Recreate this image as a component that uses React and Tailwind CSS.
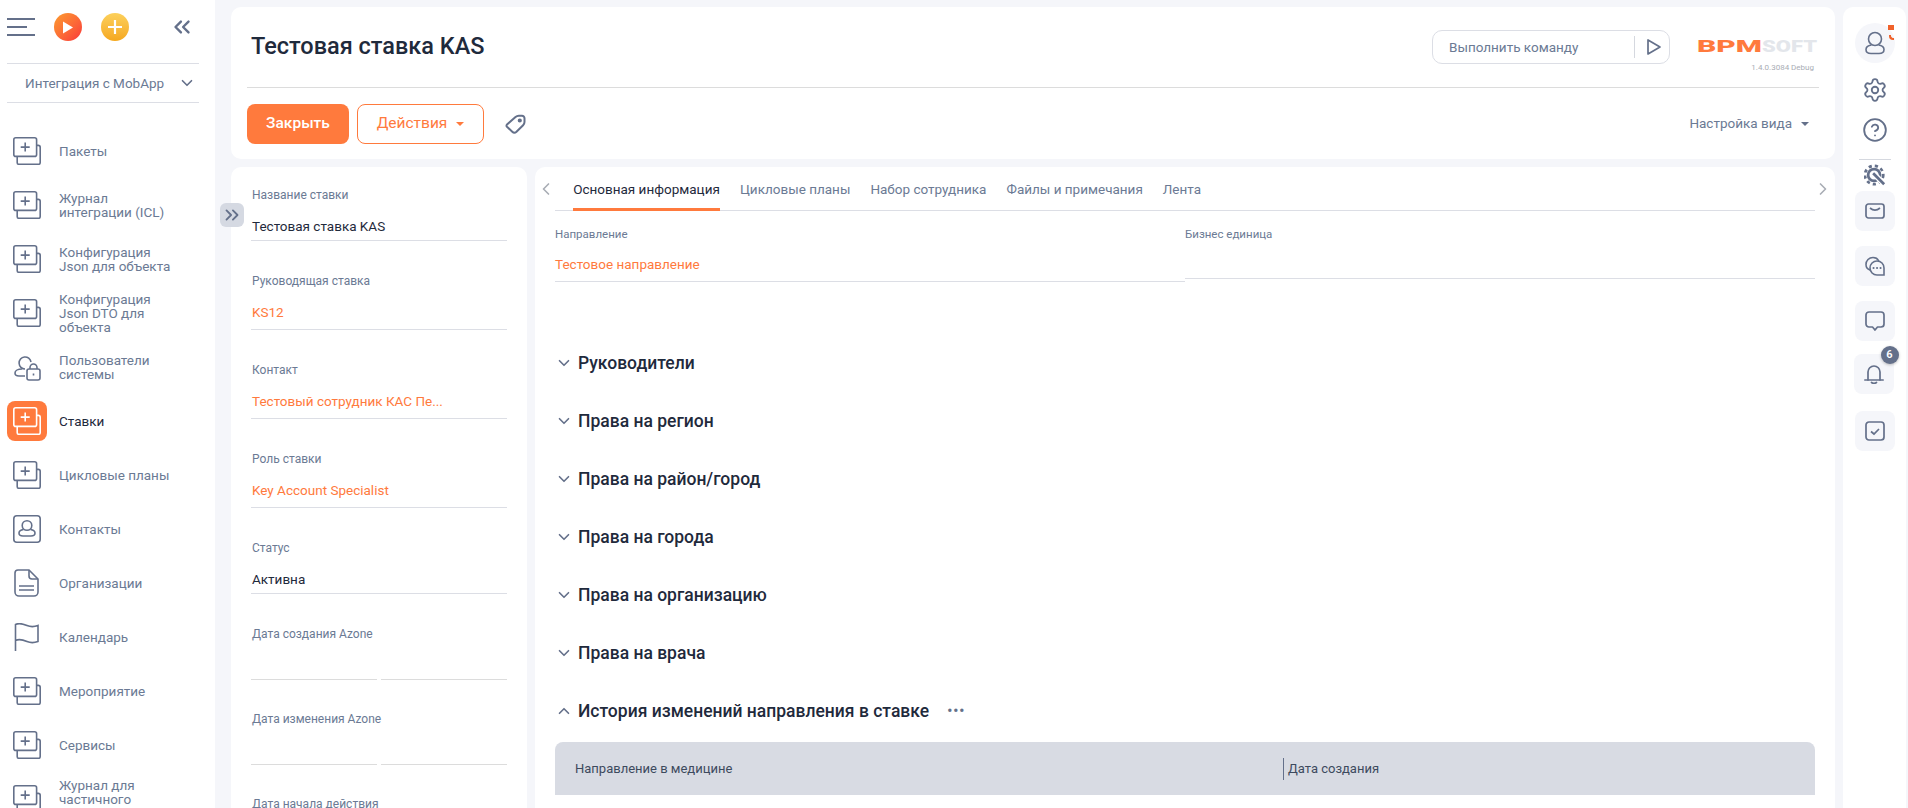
import { ChevronDown, ChevronUp, ChevronLeft, ChevronRight, ChevronsLeft, ChevronsRight, Settings, CircleHelp } from 'lucide-react'

const navColor = '#64708a'

const PlusStack = ({ color = navColor }) => (
  <svg width="28" height="28" viewBox="0 0 28 28" fill="none" stroke={color} strokeWidth="1.6">
    <rect x="0.8" y="0.8" width="22.8" height="18.6" rx="2" />
    <path d="M23.6 8.4h1.6a2 2 0 0 1 2 2v15a2 2 0 0 1-2 2H6.2a2 2 0 0 1-2-2v-6" />
    <path d="M12.2 5.6v9M7.7 10.1h9" />
  </svg>
)

const UserLock = () => (
  <svg width="30" height="30" viewBox="0 0 30 30" fill="none" stroke={navColor} strokeWidth="1.6">
    <path d="M13 17a6 6 0 1 1 6-7" />
    <path d="M10 17c-4 0-7 1.600-7 4 0 2 1.500 3 4 3h6" />
    <rect x="15" y="17" width="13" height="11" rx="2" />
    <path d="M18 17v-1.500a3.500 3.500 0 0 1 7 0V17M21.500 21.500v2" />
  </svg>
)

const ContactCard = () => (
  <svg width="28" height="28" viewBox="0 0 28 28" fill="none" stroke={navColor} strokeWidth="1.6">
    <rect x="0.8" y="0.8" width="26.4" height="26.4" rx="3" />
    <circle cx="14" cy="10.500" r="4.800" />
    <path d="M10.500 14.500c-3 .5-4.500 2-4.500 3.500 0 2 1.500 3 4 3h8c2.500 0 4-1 4-3 0-1.500-1.500-3-4.500-3.500" />
  </svg>
)

const DocIcon = () => (
  <svg width="26" height="28" viewBox="0 0 26 28" fill="none" stroke={navColor} strokeWidth="1.6">
    <path d="M4 1h11l9 9v13a4 4 0 0 1-4 4H5a4 4 0 0 1-4-4V4a3 3 0 0 1 3-3z" />
    <path d="M15 1v6a3 3 0 0 0 3 3h6" />
    <path d="M5 17h15M5 21h15" />
  </svg>
)

const FlagIcon = () => (
  <svg width="26" height="28" viewBox="0 0 26 28" fill="none" stroke={navColor} strokeWidth="1.6">
    <path d="M1.500 28V1.500c4-2 8-.5 11.500 1s7 1.500 11 0v16c-4 1.500-7.500 1.500-11 0s-7.500-3-11.500-1" />
  </svg>
)

const navItems = [
  { label: 'Пакеты' },
  { label: 'Журнал\nинтеграции (ICL)' },
  { label: 'Конфигурация\nJson для объекта' },
  { label: 'Конфигурация\nJson DTO для\nобъекта' },
  { label: 'Пользователи\nсистемы', icon: <UserLock /> },
  { label: 'Ставки', active: true },
  { label: 'Цикловые планы' },
  { label: 'Контакты', icon: <ContactCard /> },
  { label: 'Организации', icon: <DocIcon /> },
  { label: 'Календарь', icon: <FlagIcon /> },
  { label: 'Мероприятие' },
  { label: 'Сервисы' },
  { label: 'Журнал для\nчастичного\nобновления' },
]

const fields = [
  { label: 'Название ставки', value: 'Тестовая ставка KAS', h: 'h-[86px]', pb: 'pb-[2px]' },
  { label: 'Руководящая ставка', value: 'KS12', link: true, h: 'h-[89px]', pb: 'pb-[5px]' },
  { label: 'Контакт', value: 'Тестовый сотрудник КАС Пе...', link: true, h: 'h-[89px]', pb: 'pb-[5px]' },
  { label: 'Роль ставки', value: 'Key Account Specialist', link: true, h: 'h-[89px]', pb: 'pb-[5px]' },
  { label: 'Статус', value: 'Активна', h: 'h-[86px]', pb: 'pb-[2px]' },
  { label: 'Дата создания Azone', split: true, h: 'h-[85px]' },
  { label: 'Дата изменения Azone', split: true, h: 'h-[85px]' },
  { label: 'Дата начала действия', split: true, h: 'h-[85px]' },
]

const tabs = ['Цикловые планы', 'Набор сотрудника', 'Файлы и примечания', 'Лента']

const sections = ['Руководители', 'Права на регион', 'Права на район/город', 'Права на города', 'Права на организацию', 'Права на врача']

function Sidebar() {
  return (
    <aside className="w-[215px] shrink-0 bg-white">
      <div className="flex h-[63px] items-start px-[7px] pt-[13px]">
        <div className="mt-[5px] flex h-[18px] w-[28px] flex-col justify-between">
          <div className="h-[2px] w-[28px] bg-[#64708a]" />
          <div className="h-[2px] w-[20px] bg-[#64708a]" />
          <div className="h-[2px] w-[28px] bg-[#64708a]" />
        </div>
        <div className="ml-[19px] flex h-[28px] w-[28px] items-center justify-center rounded-full bg-gradient-to-br from-[#fb9a2d] to-[#f9303a]">
          <svg width="12" height="13" viewBox="0 0 12 13" fill="white"><path d="M1 0.500 11 6.500 1 12.500z" /></svg>
        </div>
        <div className="ml-[19px] flex h-[28px] w-[28px] items-center justify-center rounded-full bg-gradient-to-b from-[#fcd05a] to-[#f5a81c]">
          <svg width="14" height="14" viewBox="0 0 14 14" stroke="white" strokeWidth="2.200"><path d="M7 0v14M0 7h14" /></svg>
        </div>
        <ChevronsLeft size={26} strokeWidth={2.200} color="#64708a" className="ml-[40px] mt-[1px]" />
      </div>
      <div className="mx-[7px] flex h-[40px] w-[192px] items-center whitespace-nowrap border-y border-[#dcdee5] pl-[18px] text-[13.5px] text-[#6b7a94]">
        <span className="w-[150px]">Интеграция с MobApp</span>
        <ChevronDown size={18} strokeWidth={2.200} color="#64708a" className="ml-[3px]" />
      </div>
      <nav className="pt-[21px]">
        {navItems.map((item) => (
          <div key={item.label} className="flex h-[54px] items-center">
            <div className="flex w-[59px] shrink-0 justify-center pr-[5px]">
              {item.active ? (
                <div className="flex h-[40px] w-[40px] items-center justify-center rounded-[8px] bg-[#ff7a3d]">
                  <PlusStack color="white" />
                </div>
              ) : (
                item.icon || <PlusStack />
              )}
            </div>
            <div className={`w-[150px] whitespace-pre-line text-[13.5px] leading-[14px] ${item.active ? 'text-[#1f2a3c]' : 'text-[#6b7a94]'}`}>
              {item.label}
            </div>
          </div>
        ))}
      </nav>
    </aside>
  )
}

function Header() {
  return (
    <section className="flex h-[152px] flex-col rounded-[10px] bg-white px-[16px]">
      <div className="flex h-[81px] shrink-0 border-b border-[#dcdcdc]">
        <h1 className="pl-[4px] pt-[23px] text-[23.5px] font-medium leading-[32px] text-[#1f2a3c]">Тестовая ставка KAS</h1>
        <div className="ml-auto mt-[23px] flex h-[34px] w-[238px] items-center whitespace-nowrap rounded-[10px] border border-[#dcdee5] pl-[16px] text-[13.5px] text-[#6b7a94]">
          <span className="w-[185px]">Выполнить команду</span>
          <div className="h-[22px] w-px bg-[#d5d8df]" />
          <svg width="16" height="18" viewBox="0 0 16 18" fill="none" stroke="#64708a" strokeWidth="1.700" className="ml-[11px]">
            <path d="M2 2v14l12-7z" strokeLinejoin="round" />
          </svg>
        </div>
        <div className="ml-[27px] w-[122px] pt-[30px]">
          <svg width="122" height="18" viewBox="0 0 122 18" className="overflow-visible">
            <text x="0" y="15" fontFamily="Roboto, sans-serif" fontWeight="900" fontSize="17" fill="#ff7a3d" textLength="65" lengthAdjust="spacingAndGlyphs">BPM</text>
            <text x="65" y="15" fontFamily="Roboto, sans-serif" fontWeight="900" fontSize="17" fill="#e3e6eb" textLength="55" lengthAdjust="spacingAndGlyphs">SOFT</text>
          </svg>
          <div className="pr-[5px] pt-[8px] text-right text-[8px] leading-[10px] text-[#a9adb5]">1.4.0.3084 Debug</div>
        </div>
      </div>
      <div className="flex flex-1 items-center">
        <button className="h-[40px] w-[102px] rounded-[8px] bg-[#ff7a3d] text-[15.5px] font-medium text-white">Закрыть</button>
        <button className="ml-[8px] flex h-[40px] w-[127px] items-center justify-center gap-[9px] rounded-[8px] border border-[#ff7a3d] text-[15.5px] text-[#ff7a3d]">
          Действия
          <span className="h-0 w-0 border-x-[4px] border-t-[4px] border-x-transparent border-t-[#ff7a3d]" />
        </button>
        <svg width="22" height="22" viewBox="0 0 22 22" fill="none" stroke="#64708a" strokeWidth="2" className="ml-[21px]">
          <path d="M2 11.500 10.500 4c1-.9 2-1.300 3.300-1.300H17a2.500 2.500 0 0 1 2.500 2.500v3.800c0 1.200-.5 2.300-1.400 3.200L11.500 18.800c-1.300 1.200-3 1.200-4.200 0L2 13.800c-.7-.7-.7-1.600 0-2.300z" />
          <circle cx="14.800" cy="7.500" r="1.100" />
        </svg>
        <div className="ml-auto flex items-center pr-[10px] text-[13.5px] text-[#6b7a94]">
          Настройка вида
          <span className="ml-[9px] h-0 w-0 border-x-[4px] border-t-[4px] border-x-transparent border-t-[#64708a]" />
        </div>
      </div>
    </section>
  )
}

function LeftPanel() {
  return (
    <section className="h-full w-[296px] shrink-0 overflow-hidden rounded-t-[10px] bg-white px-[20px] pt-[21px]">
      {fields.map((f) => (
        <div key={f.label} className={`flex flex-col ${f.h}`}>
          <div className="pl-[1px] text-[12px] leading-[14px] text-[#6b7a94]">{f.label}</div>
          {f.split ? (
            <div className="mt-[38px] flex gap-[4px]">
              <div className="h-px flex-1 bg-[#dcdcdc]" />
              <div className="h-px flex-1 bg-[#dcdcdc]" />
            </div>
          ) : (
            <div className={`mt-[12px] truncate border-b border-[#dcdee5] pl-[1px] text-[13.5px] leading-[24px] ${f.pb} ${f.link ? 'text-[#ff7a3d]' : 'text-[#1f2a3c]'}`}>
              {f.value}
            </div>
          )}
        </div>
      ))}
    </section>
  )
}

function Section({ title, open, children }) {
  const Chevron = open ? ChevronUp : ChevronDown
  return (
    <div className="flex h-[58px] items-center pb-[1px]">
      <Chevron size={18} strokeWidth={2.200} color="#64708a" className="mr-[5px] shrink-0" />
      <span className="text-[17.5px] font-medium leading-[24px] text-[#1f2a3c]">{title}</span>
      {children}
    </div>
  )
}

function MainPanel() {
  return (
    <section className="h-full min-w-0 flex-1 overflow-hidden rounded-t-[10px] bg-white px-[20px]">
      <div className="flex h-[44px] items-start whitespace-nowrap border-b border-[#dcdee5] text-[13.5px] leading-[18px]">
        <ChevronLeft size={20} strokeWidth={2} color="#a9adb5" className="-ml-[19px] mt-[12px]" />
        <div className="ml-[17px] flex h-[44px] w-[147px] items-start justify-center border-b-[3px] border-[#ff7a3d] pt-[13px] text-[#1f2a3c]">
          Основная информация
        </div>
        <div className="flex gap-[20px] pl-[20px] pt-[13px] text-[#6b7a94]">
          {tabs.map((t) => <span key={t}>{t}</span>)}
        </div>
        <ChevronRight size={20} strokeWidth={2} color="#a9adb5" className="-mr-[18px] ml-auto mt-[12px]" />
      </div>
      <div className="flex h-[108px] items-start pt-[16px]">
        <div className="flex-1">
          <div className="text-[11.5px] leading-[14px] text-[#6b7a94]">Направление</div>
          <div className="mt-[11px] h-[30px] border-b border-[#dcdee5] text-[13.5px] leading-[24px] text-[#ff7a3d]">Тестовое направление</div>
        </div>
        <div className="flex-1">
          <div className="text-[11.5px] leading-[14px] text-[#6b7a94]">Бизнес единица</div>
          <div className="mt-[11px] h-[27px] border-b border-[#dcdee5]" />
        </div>
      </div>
      <div className="pt-[15px]">
        {sections.map((s) => <Section key={s} title={s} />)}
        <Section title="История изменений направления в ставке" open>
          <span className="ml-[18px] text-[14px] font-bold leading-[14px] tracking-[1px] text-[#64708a]">•••</span>
        </Section>
      </div>
      <div className="mt-[2px] flex h-[53px] items-center rounded-t-[8px] bg-[#d8dbe3] pl-[20px] text-[13px] text-[#3d4a5e]">
        <span className="w-[708px]">Направление в медицине</span>
        <div className="mr-[4px] h-[22px] w-px bg-[#64708a]" />
        <span>Дата создания</span>
      </div>
    </section>
  )
}

function RailTile({ className = '', children }) {
  return <div className={`relative flex h-[40px] w-[40px] items-center justify-center rounded-[8px] bg-[#f5f6fa] ${className}`}>{children}</div>
}

function RightRail() {
  return (
    <aside className="flex h-full w-[63px] shrink-0 flex-col items-center rounded-t-[10px] bg-white pt-[16px]">
      <div className="relative flex h-[40px] w-[40px] items-center justify-center rounded-full bg-[#f5f6fa]">
        <svg width="20" height="24" viewBox="0 0 20 24" fill="none" stroke="#64708a" strokeWidth="1.600">
          <circle cx="10" cy="8" r="6.500" />
          <path d="M6.500 14c-3 .5-5.500 2-5.500 4.500S3 22.500 6 22.500h8c3 0 5-1.500 5-4s-2.500-4-5.500-4.500" />
        </svg>
        <span className="absolute right-[1px] top-[2px] h-[5px] w-[6px] bg-[#f0622b]" />
        <span className="absolute right-[1px] top-[12px] h-[5px] w-[5px] rounded-bl-[4px] border-b-2 border-l-2 border-[#f0622b]" />
      </div>
      <Settings size={26} strokeWidth={1.700} color="#64708a" className="mt-[14px]" />
      <CircleHelp size={26} strokeWidth={1.700} color="#64708a" className="mt-[14px]" />
      <div className="mt-[16px] h-px w-[32px] bg-[#d5d8df]" />
      <svg width="22" height="22" viewBox="0 0 24 24" fill="none" stroke="#64708a" className="mt-[4px]">
        <circle cx="11" cy="12" r="6.500" strokeWidth="3" />
        <circle cx="11" cy="12" r="10" strokeWidth="3" strokeDasharray="3.500 3.300" />
        <path d="M10 10l13 13" stroke="white" strokeWidth="6" />
        <path d="M10 10l12 12" strokeWidth="3" />
      </svg>
      <div className="mt-[5px] flex flex-col items-center">
        <RailTile>
          <svg width="20" height="16" viewBox="0 0 20 16" fill="none" stroke="#64708a" strokeWidth="1.700">
            <rect x="1" y="1" width="18" height="14" rx="2.500" />
            <path d="M5 5c3 2.500 7 2.500 10 0" />
          </svg>
        </RailTile>
        <RailTile className="mt-[15px]">
          <svg width="20" height="20" viewBox="0 0 20 20" fill="none" stroke="#64708a" strokeWidth="1.600" strokeLinecap="round">
            <path d="M5 14C2 13 1 11 1 8.500 1 4.500 4 1.500 8 1.500c2.500 0 4.500 1 5.500 3" />
            <path d="M12 5c4 0 7 3 7 7v7h-7a7 7 0 0 1 0-14z" />
            <path d="M8.500 12h.1M12 12h.1M15.500 12h.1" strokeWidth="2" />
          </svg>
        </RailTile>
        <RailTile className="mt-[15px]">
          <svg width="20" height="20" viewBox="0 0 20 20" fill="none" stroke="#64708a" strokeWidth="1.700" strokeLinejoin="round">
            <path d="M4 1h12a3 3 0 0 1 3 3v9a3 3 0 0 1-3 3h-3.500L10 19l-2.500-3H4a3 3 0 0 1-3-3V4a3 3 0 0 1 3-3z" />
          </svg>
        </RailTile>
        <RailTile className="-ml-[2px] mt-[13px]">
          <svg width="20" height="20" viewBox="0 0 20 20" fill="none" stroke="#64708a" strokeWidth="1.700" strokeLinecap="round">
            <path d="M4 16V8a6 6 0 0 1 12 0v8" />
            <path d="M0.800 16h18.400" />
            <path d="M7.500 18.500c1.500 1 3.500 1 5 0" />
          </svg>
          <span className="absolute -right-[5px] -top-[8px] flex h-[18px] w-[18px] items-center justify-center rounded-full bg-[#64708a] text-[11px] font-semibold text-white shadow-[0_1px_3px_rgba(0,0,0,0.25)]">6</span>
        </RailTile>
        <RailTile className="mt-[17px]">
          <svg width="20" height="20" viewBox="0 0 20 20" fill="none" stroke="#64708a" strokeWidth="1.700">
            <rect x="1" y="1" width="18" height="18" rx="3" />
            <path d="M6 10.500l3 2.500 5-5" />
          </svg>
        </RailTile>
      </div>
    </aside>
  )
}

export default function App() {
  return (
    <div className="relative flex h-[808px] w-[1908px] overflow-hidden bg-[#f5f6fa] font-['Roboto',sans-serif]">
      <Sidebar />
      <div className="flex min-w-0 flex-1 flex-col gap-[8px] pl-[16px] pt-[7px]">
        <Header />
        <div className="flex min-h-0 flex-1 gap-[8px]">
          <LeftPanel />
          <MainPanel />
        </div>
      </div>
      <div className="flex h-full pl-[8px] pr-[2px] pt-[7px]">
        <RightRail />
      </div>
      <div className="absolute left-[220px] top-[203px] flex h-[24px] w-[24px] items-center justify-center rounded-[6px] bg-[#d5d9e2]">
        <ChevronsRight size={22} strokeWidth={2} color="#64708a" />
      </div>
    </div>
  )
}
